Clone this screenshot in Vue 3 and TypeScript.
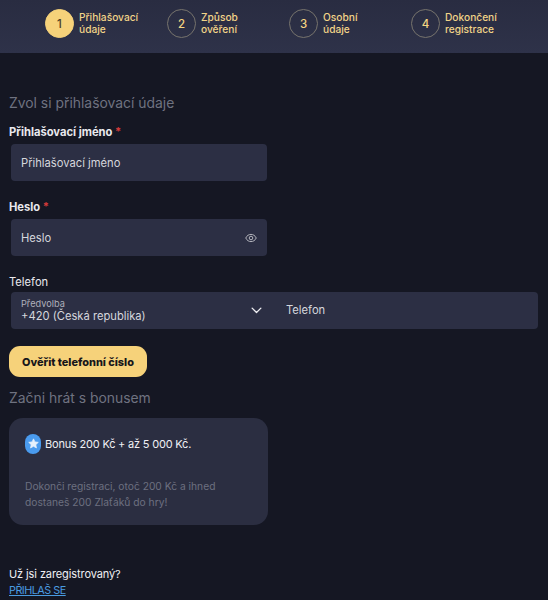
<script setup lang="ts">
const steps = [
  { n: 1, a: 'Přihlašovací', b: 'údaje', active: true },
  { n: 2, a: 'Způsob', b: 'ověření', active: false },
  { n: 3, a: 'Osobní', b: 'údaje', active: false },
  { n: 4, a: 'Dokončení', b: 'registrace', active: false },
]
</script>

<template>
  <div class="page">
    <header class="stepper">
      <div v-for="s in steps" :key="s.n" class="step">
        <span class="circle" :class="{ active: s.active }">{{ s.n }}</span>
        <span class="step-text">{{ s.a }}<br />{{ s.b }}</span>
      </div>
    </header>

    <main class="content">
      <h2 class="title first">Zvol si přihlašovací údaje</h2>

      <label class="label strong first-label">Přihlašovací jméno <i>*</i></label>
      <div class="field half">Přihlašovací jméno</div>

      <label class="label strong">Heslo <i>*</i></label>
      <div class="field half password">
        <span>Heslo</span>
        <svg class="eye" viewBox="0 0 24 24" width="12" height="12" fill="none" stroke="currentColor" stroke-width="2">
          <path d="M1.5 12C4 7 7.700 4.800 12 4.800S20 7 22.500 12C20 17 16.300 19.200 12 19.200S4 17 1.500 12Z" />
          <circle cx="12" cy="12" r="3.600" />
        </svg>
      </div>

      <label class="label phone-label">Telefon</label>
      <div class="phone">
        <div class="prefix">
          <div class="prefix-text">
            <small>Předvolba</small>
            <span>+420 (Česká republika)</span>
          </div>
          <svg class="chev" viewBox="0 0 12 8" width="11" height="7" fill="none" stroke="currentColor" stroke-width="1.500" stroke-linecap="round" stroke-linejoin="round">
            <path d="M1 1.300 6 6.300 11 1.300" />
          </svg>
        </div>
        <div class="phone-input">Telefon</div>
      </div>

      <button class="verify" type="button">Ověřit telefonní číslo</button>

      <h2 class="title second">Začni hrát s bonusem</h2>

      <section class="card">
        <div class="bonus">
          <span class="badge">
            <svg viewBox="0 0 24 24" width="11" height="11" fill="#e6f1fc">
              <path d="M12 1.800 15.200 8.500 22.500 9.500 17.100 14.500 18.500 21.800 12 18.200 5.500 21.800 6.900 14.500 1.500 9.500 8.800 8.500Z" stroke="#e6f1fc" stroke-width="1.500" stroke-linejoin="round" />
            </svg>
          </span>
          <span>Bonus 200 Kč + až 5 000 Kč.</span>
        </div>
        <p class="desc">Dokonči registraci, otoč 200 Kč a ihned<br />dostaneš 200 Zlaťáků do hry!</p>
      </section>

      <p class="already">Už jsi zaregistrovaný?</p>
      <a class="login" href="#">PŘIHLAŠ SE</a>
    </main>
  </div>
</template>

<style scoped>
.page {
  width: 548px;
  height: 600px;
  overflow: hidden;
  background: #151723;
  font-family: Inter, "Noto Sans", sans-serif;
  color: #e9e9ee;
}
.stepper {
  height: 53px;
  box-sizing: border-box;
  padding: 9px 0 0 45px;
  display: grid;
  grid-template-columns: repeat(4, 122px);
  background: linear-gradient(180deg, #292c41 0%, #2e3249 100%);
}
.step {
  display: flex;
  gap: 5px;
  align-items: flex-start;
}
.circle {
  width: 29px;
  height: 29px;
  flex: none;
  box-sizing: border-box;
  border: 1px solid #77746d;
  border-radius: 50%;
  display: flex;
  align-items: center;
  justify-content: center;
  font-size: 11.500px;
  font-weight: 500;
  color: #f4d582;
}
.circle.active {
  background: #f6d27a;
  border-color: #f6d27a;
  color: #4b4026;
}
.step-text {
  font-size: 10.200px;
  line-height: 11.500px;
  padding-top: 3px;
  font-weight: 500;
  color: #f2d488;
  white-space: nowrap;
}
.content {
  padding: 0 10px 0 9px;
}
.title {
  margin: 0;
  font-size: 13.900px;
  line-height: 18px;
  font-weight: 400;
  color: #6f7280;
}
.title.first {
  padding-top: 41px;
}
.title.second {
  margin-top: 12px;
}
.label {
  display: block;
  font-size: 11.200px;
  line-height: 14px;
  color: #e9e9ee;
  margin-top: 19px;
}
.label.first-label {
  margin-top: 13px;
}
.label.strong {
  font-weight: 700;
}
.label i {
  font-style: normal;
  color: #d33a3a;
}
.field {
  box-sizing: border-box;
  height: 37px;
  margin: 5px 0 0 2px;
  padding: 0 10px;
  display: flex;
  align-items: center;
  background: #2c2f44;
  border-radius: 4px;
  font-size: 11.200px;
  color: #d6d7dd;
}
.half {
  width: 256px;
}
.password {
  justify-content: space-between;
}
.eye {
  color: #b4b5bd;
}
.phone {
  margin: 3px 0 0 2px;
  width: 527px;
  height: 37px;
  display: flex;
  background: #2c2f44;
  border-radius: 4px;
}
.prefix {
  box-sizing: border-box;
  width: 256px;
  padding: 0 5px 0 10px;
  display: flex;
  align-items: center;
  justify-content: space-between;
}
.prefix-text {
  display: flex;
  flex-direction: column;
}
.prefix-text small {
  font-size: 9.200px;
  line-height: 12px;
  color: #aeb0bb;
}
.prefix-text span {
  font-size: 11.200px;
  line-height: 13px;
  color: #d6d7dd;
}
.chev {
  color: #eeeef2;
}
.phone-input {
  padding: 0 0 1px 19px;
  display: flex;
  align-items: center;
  font-size: 11.200px;
  color: #d6d7dd;
}
.verify {
  display: block;
  margin-top: 17px;
  width: 138px;
  height: 31px;
  padding: 0;
  border: 0;
  border-radius: 11px;
  background: #f6d27a;
  color: #17161a;
  font-family: inherit;
  font-size: 10.900px;
  font-weight: 800;
}
.card {
  box-sizing: border-box;
  margin-top: 11px;
  width: 259px;
  height: 107px;
  padding: 15px 16px;
  background: #2b2e41;
  border-radius: 14px;
}
.bonus {
  display: flex;
  align-items: center;
  gap: 4px;
  height: 21px;
  font-size: 11px;
  letter-spacing: -0.2px;
  color: #f0f0f4;
}
.badge {
  width: 16px;
  height: 20px;
  flex: none;
  border-radius: 8px;
  background: #4a9bee;
  display: flex;
  align-items: center;
  justify-content: center;
}
.desc {
  margin: 24px 0 0;
  font-size: 10.250px;
  line-height: 16px;
  color: #6d7080;
}
.already {
  margin: 41px 0 0;
  font-size: 11px;
  letter-spacing: -0.1px;
  line-height: 16px;
  color: #f0f0f4;
}
.login {
  display: block;
  margin-top: 1px;
  font-size: 10.800px;
  letter-spacing: -0.5px;
  line-height: 16px;
  color: #4a9be0;
  text-decoration: underline;
}
</style>
